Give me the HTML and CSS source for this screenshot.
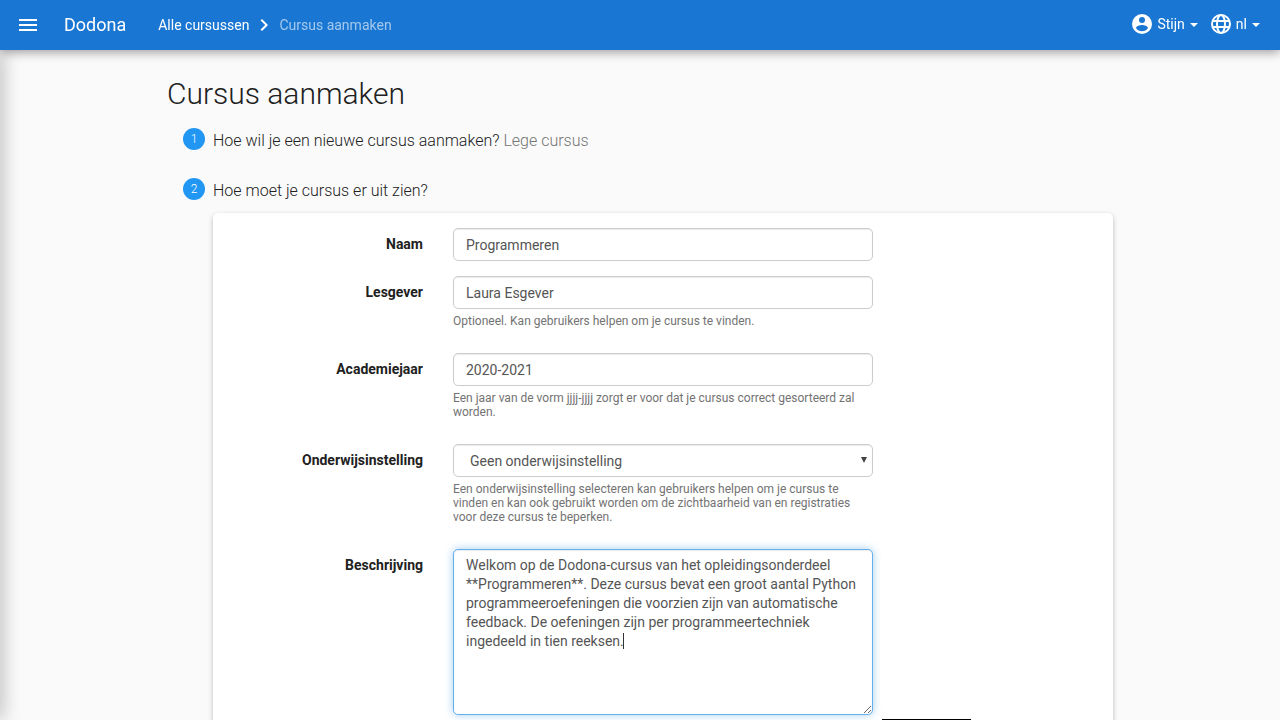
FILE: index.html
```html
<!DOCTYPE html>
<html lang="nl">
<head>
<meta charset="utf-8">
<meta name="viewport" content="width=device-width, initial-scale=1">
<title>Cursus aanmaken - Dodona</title>
<link rel="stylesheet" href="styles.css">
</head>
<body>
<header class="navbar">
  <button class="nav-button menu" type="button" aria-label="Menu">
    <svg class="icon" viewBox="0 0 24 24"><path d="M3 6h18v2H3V6m0 5h18v2H3v-2m0 5h18v2H3v-2z"/></svg>
  </button>
  <a class="brand" href="#">Dodona</a>
  <nav class="crumbs">
    <a href="#">Alle cursussen</a>
    <svg class="icon" viewBox="0 0 24 24"><path d="M8.6 16.6 13.2 12 8.6 7.4 10 6l6 6-6 6z"/></svg>
    <a class="current" href="#">Cursus aanmaken</a>
  </nav>
  <div class="nav-right">
    <button class="nav-button" type="button">
      <svg class="icon" viewBox="0 0 24 24"><path d="M12 2a10 10 0 1 0 0 20 10 10 0 0 0 0-20m0 3a3 3 0 1 1 0 6 3 3 0 0 1 0-6m0 14.2a7.2 7.2 0 0 1-6-3.2c0-2 4-3.1 6-3.1s6 1.100 6 3.100a7.200 7.200 0 0 1-6 3.200z"/></svg>
      <span>Stijn</span><span class="caret"></span>
    </button>
    <button class="nav-button" type="button">
      <svg class="icon globe" viewBox="0 0 24 24"><circle cx="12" cy="12" r="9"/><ellipse cx="12" cy="12" rx="4" ry="9"/><path d="M3.500 9h17M3.500 15h17"/></svg>
      <span>nl</span><span class="caret"></span>
    </button>
  </div>
</header>
<div class="drawer-edge"></div>
<main class="page">
  <h1>Cursus aanmaken</h1>
  <section class="step">
    <span class="step-number">1</span>
    <h2>Hoe wil je een nieuwe cursus aanmaken? <span class="answer">Lege cursus</span></h2>
  </section>
  <section class="step">
    <span class="step-number">2</span>
    <h2>Hoe moet je cursus er uit zien?</h2>
    <form class="card">
      <div class="form-row">
        <label for="name">Naam</label>
        <div class="field"><input class="control" id="name" type="text" value="Programmeren"></div>
      </div>
      <div class="form-row">
        <label for="teacher">Lesgever</label>
        <div class="field">
          <input class="control" id="teacher" type="text" value="Laura Esgever">
          <p class="help">Optioneel. Kan gebruikers helpen om je cursus te vinden.</p>
        </div>
      </div>
      <div class="form-row">
        <label for="year">Academiejaar</label>
        <div class="field">
          <input class="control" id="year" type="text" value="2020-2021">
          <p class="help">Een jaar van de vorm jjjj-jjjj zorgt er voor dat je cursus correct gesorteerd zal worden.</p>
        </div>
      </div>
      <div class="form-row">
        <label for="institution">Onderwijsinstelling</label>
        <div class="field">
          <div class="select-wrap">
            <select class="control" id="institution"><option>Geen onderwijsinstelling</option></select>
            <svg class="select-arrow" viewBox="0 0 6 6"><path d="M0 0h6L3 6z"/></svg>
          </div>
          <p class="help">Een onderwijsinstelling selecteren kan gebruikers helpen om je cursus te vinden en kan ook gebruikt worden om de zichtbaarheid van en registraties voor deze cursus te beperken.</p>
        </div>
      </div>
      <div class="form-row">
        <label for="description">Beschrijving</label>
        <div class="field area-wrap">
          <textarea class="control active" id="description" spellcheck="false">Welkom op de Dodona-cursus van het opleidingsonderdeel **Programmeren**. Deze cursus bevat een groot aantal Python programmeeroefeningen die voorzien zijn van automatische feedback. De oefeningen zijn per programmeertechniek ingedeeld in tien reeksen.</textarea>
          <span class="text-cursor"></span>
          <div class="popover"></div>
        </div>
      </div>
    </form>
  </section>
</main>
</body>
</html>
```
FILE: styles.css
```css
* { box-sizing: border-box; }
body {
  margin: 0;
  height: 100vh;
  overflow: hidden;
  background: #fafafa;
  color: #212121;
  font: 14px/20px Roboto, sans-serif;
}
a { color: inherit; text-decoration: none; }
.navbar {
  position: relative;
  z-index: 2;
  display: flex;
  align-items: center;
  height: 50px;
  padding: 0 20px 0 16px;
  background: #1976d2;
  color: #fff;
  box-shadow: 0 2px 10px rgba(0, 0, 0, .4);
}
.icon { display: block; width: 24px; height: 24px; fill: currentColor; }
.globe { fill: none; stroke: currentColor; stroke-width: 2; }
.nav-button {
  display: flex;
  align-items: center;
  padding: 0;
  border: 0;
  background: none;
  color: inherit;
  font: inherit;
}
.brand { margin: 0 32px 0 24px; font-size: 18px; }
.crumbs { display: flex; align-items: center; gap: 3px; }
.current { color: rgba(255, 255, 255, .6); }
.nav-right { display: flex; gap: 11px; margin-left: auto; padding-bottom: 2px; }
.nav-right .icon { margin-right: 3px; }
.caret {
  margin: 2px 0 0 5px;
  border: 4px solid transparent;
  border-top-color: currentColor;
  border-bottom: 0;
}
.drawer-edge {
  position: fixed;
  z-index: 1;
  top: 50px;
  bottom: 0;
  left: -10px;
  width: 10px;
  box-shadow: 0 0 20px rgba(0, 0, 0, .4);
}
.page { max-width: 978px; margin: 0 auto; padding: 22px 16px; }
h1 { margin: 0 0 12px; font-size: 30px; line-height: 44px; font-weight: 300; }
.step {
  display: grid;
  grid-template-columns: 22px 1fr;
  column-gap: 8px;
  padding-left: 16px;
  margin-bottom: 25px;
}
.step-number {
  width: 22px;
  height: 22px;
  border-radius: 50%;
  background: #2196f3;
  color: #fff;
  font-size: 12px;
  line-height: 22px;
  font-weight: 300;
  text-align: center;
}
h2 { margin: 0; font-size: 16px; line-height: 25px; font-weight: 300; }
.answer { color: #757575; }
.card {
  grid-column: 2;
  margin-top: 10px;
  padding: 15px 0;
  border-radius: 5px;
  background: #fff;
  box-shadow: 0 2px 5px rgba(0, 0, 0, .25);
}
.form-row { display: grid; grid-template-columns: 1fr 2fr 1fr; margin-bottom: 15px; }
.form-row label { padding: 6px 15px 0; font-weight: 700; text-align: right; }
.field { min-width: 0; padding: 0 15px; }
.control {
  display: block;
  width: 100%;
  height: 33px;
  padding: 6px 12px;
  border: 1px solid #ccc;
  border-radius: 5px;
  outline: 0;
  background: #fff;
  box-shadow: inset 0 1px 1px rgba(0, 0, 0, .08);
  color: #555;
  font: 14px/19px Roboto, sans-serif;
}
.select-wrap, .area-wrap { position: relative; }
select.control { appearance: none; padding: 7px 16px 5px; }
.select-arrow {
  position: absolute;
  top: 13px;
  right: 6px;
  width: 6px;
  height: 6px;
  fill: #444;
}
textarea.control { height: 166px; resize: vertical; }
.active {
  border-color: #66afe9;
  box-shadow: inset 0 1px 1px rgba(0, 0, 0, .08), 0 0 8px rgba(102, 175, 233, .6);
}
.text-cursor {
  position: absolute;
  top: 84px;
  left: 185px;
  width: 1px;
  height: 16px;
  background: #333;
}
.popover {
  position: absolute;
  top: 170px;
  left: 444px;
  width: 89px;
  height: 28px;
  background: #000;
}
.help { margin: 5px 0 25px; color: #737373; font-size: 12px; line-height: 14px; }
.form-row:has(.help) { margin-bottom: 0; }
```
